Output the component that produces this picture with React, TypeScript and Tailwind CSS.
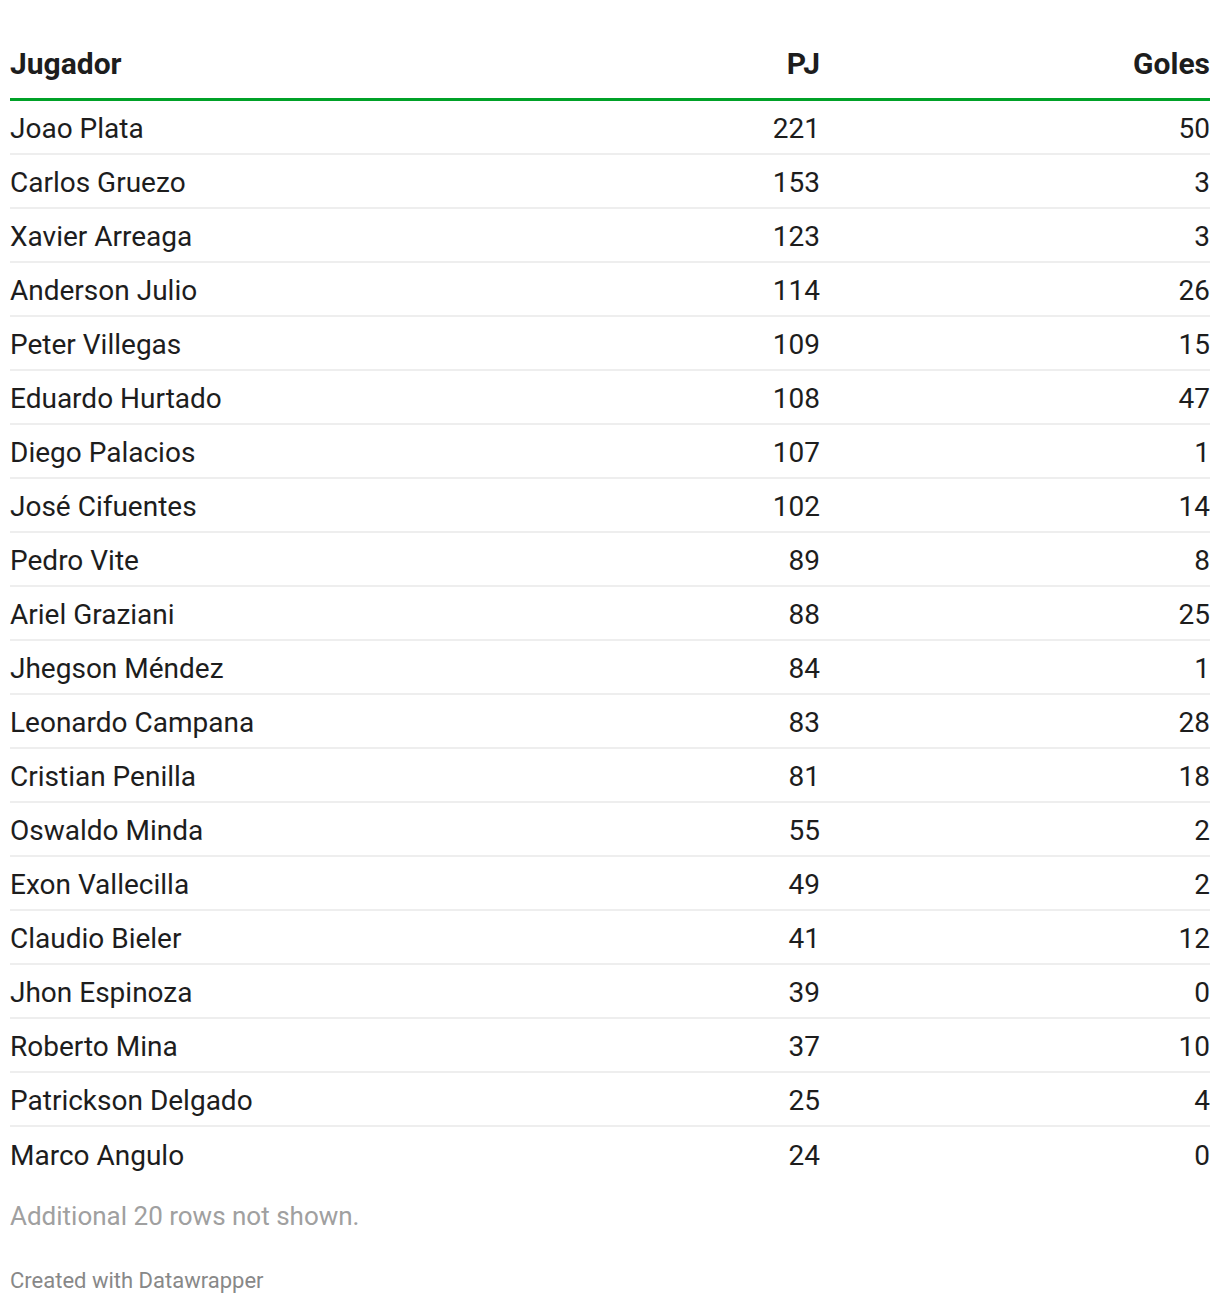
import React from 'react'

const rows: [string, number, number][] = [
  ['Joao Plata', 221, 50],
  ['Carlos Gruezo', 153, 3],
  ['Xavier Arreaga', 123, 3],
  ['Anderson Julio', 114, 26],
  ['Peter Villegas', 109, 15],
  ['Eduardo Hurtado', 108, 47],
  ['Diego Palacios', 107, 1],
  ['José Cifuentes', 102, 14],
  ['Pedro Vite', 89, 8],
  ['Ariel Graziani', 88, 25],
  ['Jhegson Méndez', 84, 1],
  ['Leonardo Campana', 83, 28],
  ['Cristian Penilla', 81, 18],
  ['Oswaldo Minda', 55, 2],
  ['Exon Vallecilla', 49, 2],
  ['Claudio Bieler', 41, 12],
  ['Jhon Espinoza', 39, 0],
  ['Roberto Mina', 37, 10],
  ['Patrickson Delgado', 25, 4],
  ['Marco Angulo', 24, 0],
]

const App = () => {
  return (
    <div className="w-[1220px] bg-white px-[10px] pt-[33px] font-['Roboto',sans-serif] text-[#1d1d1d]">
      <div className="flex h-[68px] items-center border-b-[3px] border-[#00a128] pb-[3px] text-[30px] font-bold leading-[36px]">
        <div className="flex-1">Jugador</div>
        <div className="w-[300px] text-right">PJ</div>
        <div className="w-[390px] text-right">Goles</div>
      </div>
      {rows.map(([name, pj, goles], i) => (
        <div
          key={name}
          className={
            i === rows.length - 1
              ? 'flex h-[54px] items-center pt-[4px] text-[28px] tabular-nums'
              : 'flex h-[54px] items-center border-b-2 border-[#eeeeee] pt-[4px] text-[28px] tabular-nums'
          }
        >
          <div className="flex-1">{name}</div>
          <div className="w-[300px] text-right">{pj}</div>
          <div className="w-[390px] text-right">{goles}</div>
        </div>
      ))}
      <div className="pt-[20px] text-[26px] leading-[30px] text-[#a0a0a0]">Additional 20 rows not shown.</div>
      <div className="pt-[37px] pb-[10px] text-[22px] leading-[26px] text-[#888888]">Created with Datawrapper</div>
    </div>
  )
}

export default App
